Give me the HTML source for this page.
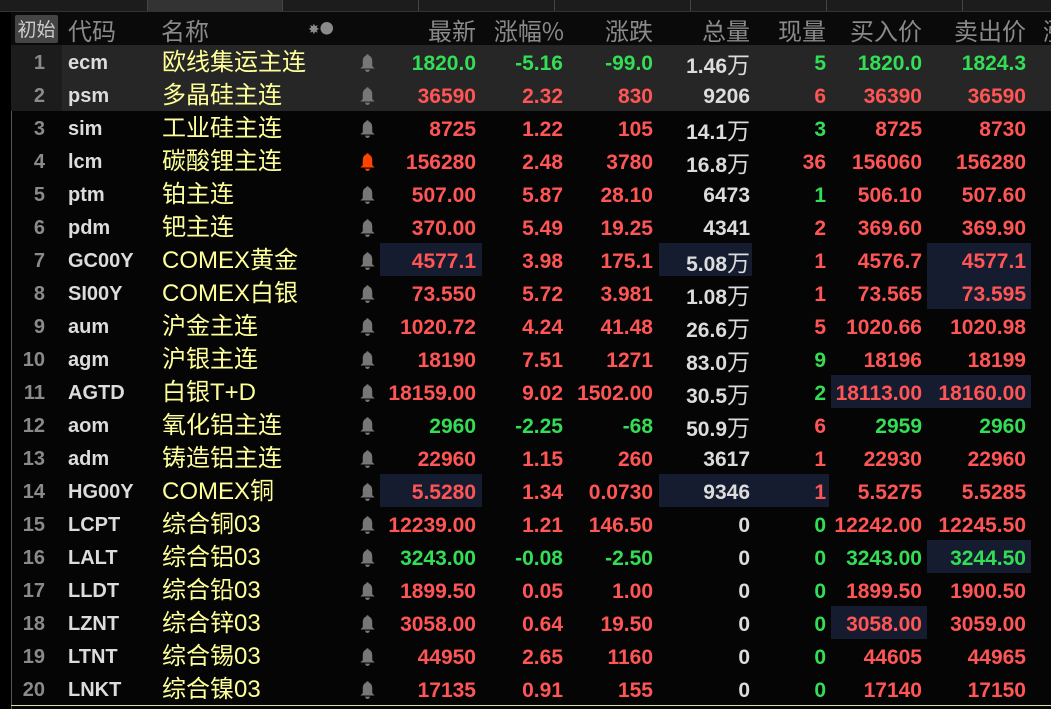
<!DOCTYPE html><html><head><meta charset="utf-8"><style>
body{margin:0;width:1051px;height:709px;background:#050505;overflow:hidden;font-family:"Liberation Sans","Noto Sans CJK SC",sans-serif;position:relative}
.tabs{position:absolute;left:0;top:0;width:1051px;height:11px;background:#1c1c1c;border-bottom:1px solid #333}
.tab{position:absolute;top:0;height:11px;border-right:1px solid #444}
.hdr{position:absolute;left:11px;top:12px;width:1040px;height:33px;background:#0a0a0a;border-bottom:1px solid #333}
.h{position:absolute;top:13px;font-size:24px;color:#8a8a8a;line-height:35px;font-family:"Noto Sans CJK SC",sans-serif}
.row{position:absolute;left:11px;width:1040px;height:33px}
.c{position:absolute;top:2px;line-height:33px;font-size:21px;font-weight:bold;white-space:nowrap}
.r{text-align:right}
.i{width:34px;left:0;text-align:right;color:#8a8a8a;font-size:20px}
.code{left:57px;color:#dcdcdc;font-size:20px}
.nm{left:151px;color:#ffff9a;font-weight:normal;font-size:24px;top:1px;font-family:"Liberation Sans","Noto Sans CJK SC",sans-serif}
.red{color:#ff5555}.grn{color:#33dd55}.wht{color:#dcdcdc}
.bx{position:absolute;background:#161c30;height:33px}
.bell{position:absolute;left:348px;top:8px;width:17px;height:19px}
</style></head><body>
<div class="tabs"><div class="tab" style="left:0;width:147px"></div><div class="tab" style="left:148px;width:134px;background:#333"></div><div class="tab" style="left:283px;width:135px"></div><div class="tab" style="left:419px;width:135px"></div><div class="tab" style="left:555px;width:135px"></div><div class="tab" style="left:691px;width:135px"></div><div class="tab" style="left:827px;width:135px"></div></div>
<div style="position:absolute;left:0;top:12px;width:11px;height:697px;background:#000;border-right:1px solid #555"></div>
<div class="hdr"></div>
<div style="position:absolute;left:15px;top:15px;width:43px;height:28px;background:#444;border-radius:2px;color:#ccc;font-size:19px;line-height:28px;text-align:center;font-family:'Noto Sans CJK SC',sans-serif">初始</div>
<div class="h" style="left:68px;top:12px">代码</div>
<div class="h" style="left:161px;top:12px">名称</div>
<div class="h" style="left:308px;top:12px;font-size:14px">✸●</div>
<div class="h r" style="left:380px;width:96px;top:12px">最新</div>
<div class="h r" style="left:470px;width:94px;top:12px">涨幅%</div>
<div class="h r" style="left:560px;width:93px;top:12px">涨跌</div>
<div class="h r" style="left:650px;width:100px;top:12px">总量</div>
<div class="h r" style="left:740px;width:86px;top:12px">现量</div>
<div class="h r" style="left:820px;width:102px;top:12px">买入价</div>
<div class="h r" style="left:920px;width:106px;top:12px">卖出价</div>
<div class="h" style="left:1043px;top:12px">涨</div>
<div id="rows"></div>
<div style="position:absolute;left:11px;top:705px;width:1040px;height:1px;background:#dddcaa"></div>
<script>
var d=[
["ecm","欧线集运主连","1820.0","-5.16","-99.0","1.46万","5","1820.0","1824.3","g"],
["psm","多晶硅主连","36590","2.32","830","9206","6","36390","36590","r"],
["sim","工业硅主连","8725","1.22","105","14.1万","3","8725","8730","r"],
["lcm","碳酸锂主连","156280","2.48","3780","16.8万","36","156060","156280","r"],
["ptm","铂主连","507.00","5.87","28.10","6473","1","506.10","507.60","r"],
["pdm","钯主连","370.00","5.49","19.25","4341","2","369.60","369.90","r"],
["GC00Y","COMEX黄金","4577.1","3.98","175.1","5.08万","1","4576.7","4577.1","r"],
["SI00Y","COMEX白银","73.550","5.72","3.981","1.08万","1","73.565","73.595","r"],
["aum","沪金主连","1020.72","4.24","41.48","26.6万","5","1020.66","1020.98","r"],
["agm","沪银主连","18190","7.51","1271","83.0万","9","18196","18199","r"],
["AGTD","白银T+D","18159.00","9.02","1502.00","30.5万","2","18113.00","18160.00","r"],
["aom","氧化铝主连","2960","-2.25","-68","50.9万","6","2959","2960","g"],
["adm","铸造铝主连","22960","1.15","260","3617","1","22930","22960","r"],
["HG00Y","COMEX铜","5.5280","1.34","0.0730","9346","1","5.5275","5.5285","r"],
["LCPT","综合铜03","12239.00","1.21","146.50","0","0","12242.00","12245.50","r"],
["LALT","综合铝03","3243.00","-0.08","-2.50","0","0","3243.00","3244.50","g"],
["LLDT","综合铅03","1899.50","0.05","1.00","0","0","1899.50","1900.50","r"],
["LZNT","综合锌03","3058.00","0.64","19.50","0","0","3058.00","3059.00","r"],
["LTNT","综合锡03","44950","2.65","1160","0","0","44605","44965","r"],
["LNKT","综合镍03","17135","0.91","155","0","0","17140","17150","r"]];
var nowc=["g","r","g","r","g","r","r","r","r","g","g","r","r","r","g","g","g","g","g","g"];
var boxes={6:[[369,102],[648,93],[916,104]],7:[[916,104]],10:[[820,200]],13:[[369,102],[648,170]],15:[[916,104]],17:[[820,96]]};
var cols=[[369,96],[459,93],[549,93],[639,100],[729,86],[809,102],[909,106]];
var h="";
d.forEach(function(r,k){
 var top=45+k*33;var bg=k<2?"background:#262626;":"";
 h+='<div class="row" style="top:'+top+'px;'+bg+'">';
 if(k<2)h+='<div style="position:absolute;left:0;top:0;width:51px;height:33px;background:#1c1c1c"></div>';
 (boxes[k]||[]).forEach(function(b){h+='<div class="bx" style="left:'+b[0]+'px;width:'+b[1]+'px"></div>'});
 var cl=r[9]=="g"?"grn":"red";
 h+='<div class="c i">'+(k+1)+'</div><div class="c code">'+r[0]+'</div><div class="c nm">'+r[1]+'</div>';
 var bc=k==3?"#ff4400":"#777";
 h+='<svg class="bell" viewBox="0 0 14 16"><path d="M7 1c-.8 0-1 .6-1 1C3.5 3 3 5 3 7.5V11L1 13h12l-2-2V7.5C11 5 10.5 3 8 2c0-.4-.2-1-1-1z" fill="'+bc+'"/><path d="M5 14h4a2 2 0 0 1-4 0z" fill="'+bc+'"/></svg>';
 var vals=[r[2],r[3],r[4],r[5],r[6],r[7],r[8]];
 vals.forEach(function(v,j){
  var c=cl;
  if(j==3)c="wht";
  if(j==4)c=nowc[k]=="g"?"grn":"red";
  var txt=v.replace("万",'<span style="font-weight:normal;font-size:23px;font-family:\'Noto Sans CJK SC\',sans-serif">万</span>');
  h+='<div class="c r '+c+'" style="left:'+cols[j][0]+'px;width:'+cols[j][1]+'px">'+txt+'</div>';
 });
 h+='</div>';
});
document.getElementById("rows").innerHTML=h;
</script>
</body></html>
